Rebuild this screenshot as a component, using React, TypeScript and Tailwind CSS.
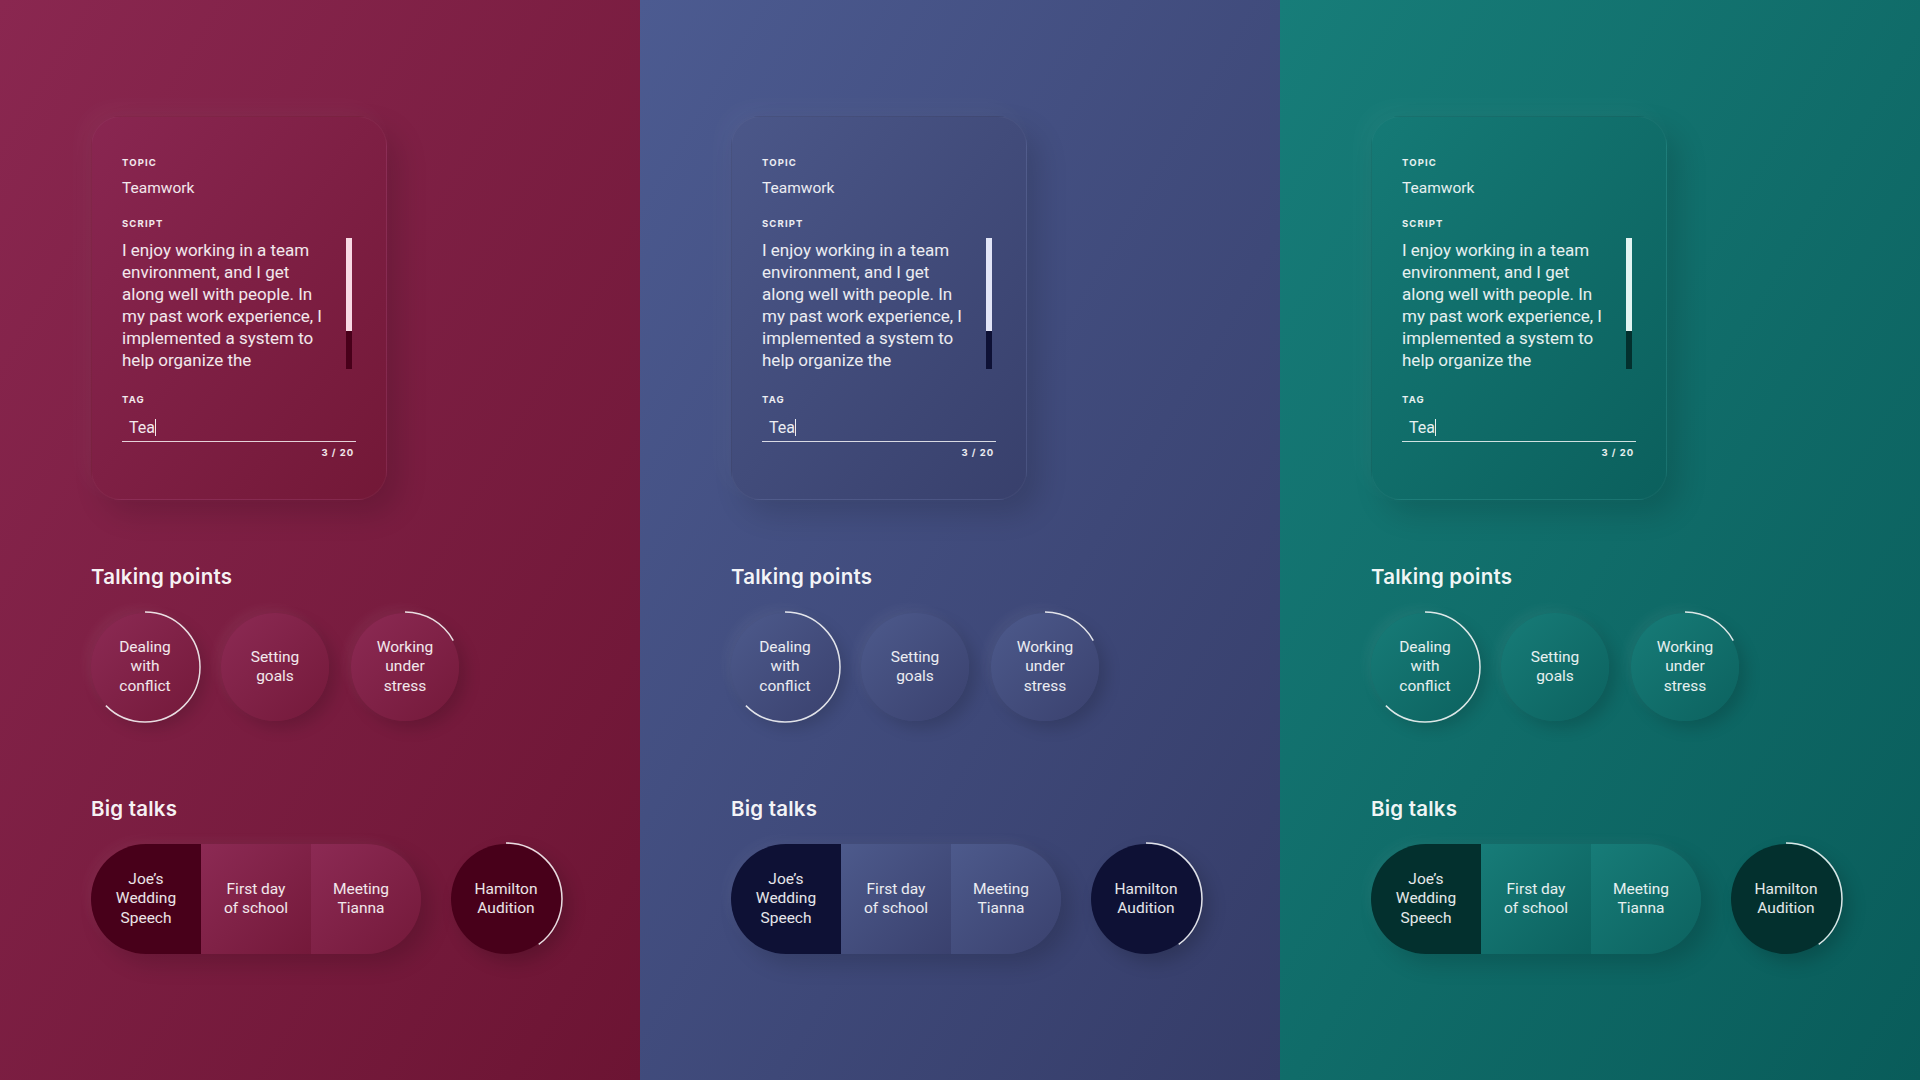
import React from 'react';

type Theme = {
  panel: string;
  card: string;
  soft: string;
  dark: string;
  thumb: string;
  track: string;
};

const themes: Theme[] = [
  {
    panel: 'bg-linear-to-br from-[#8a2750] to-[#6c1433]',
    card: 'bg-linear-to-br from-[#892651] to-[#731837]',
    soft: 'bg-linear-to-br from-[#8c2a54] to-[#74193a]',
    dark: 'bg-[#48001a]',
    thumb: 'bg-[#f8d9e4]',
    track: 'bg-[#48001a]',
  },
  {
    panel: 'bg-linear-to-br from-[#4c5b91] to-[#353c68]',
    card: 'bg-linear-to-br from-[#4b5789] to-[#38406c]',
    soft: 'bg-linear-to-br from-[#4d5a8c] to-[#3a416e]',
    dark: 'bg-[#0e1135]',
    thumb: 'bg-[#e2e5f7]',
    track: 'bg-[#0e1135]',
  },
  {
    panel: 'bg-linear-to-br from-[#177d79] to-[#095c5a]',
    card: 'bg-linear-to-br from-[#157a76] to-[#0b605d]',
    soft: 'bg-linear-to-br from-[#177c78] to-[#0c625f]',
    dark: 'bg-[#03302e]',
    thumb: 'bg-[#e2f4f2]',
    track: 'bg-[#03302e]',
  },
];

const scriptLines = [
  'I enjoy working in a team',
  'environment, and I get',
  'along well with people. In',
  'my past work experience, I',
  'implemented a system to',
  'help organize the',
];

const talkingPoints = [
  { lines: ['Dealing', 'with', 'conflict'], progress: 0.625 },
  { lines: ['Setting', 'goals'], progress: 0 },
  { lines: ['Working', 'under', 'stress'], progress: 0.17 },
];

const body = { fontFamily: 'Roboto, "Noto Sans", sans-serif' };
const heading = { fontFamily: 'Inter, "Open Sans", sans-serif' };

function Arc({ progress, size }: { progress: number; size: number }) {
  if (!progress) return null;
  const r = size / 2 - 1;
  const c = 2 * Math.PI * r;
  return (
    <svg
      width={size}
      height={size}
      viewBox={`0 0 ${size} ${size}`}
      className="absolute -top-[2px] -left-[2px] pointer-events-none"
    >
      <circle
        cx={size / 2}
        cy={size / 2}
        r={r}
        fill="none"
        stroke="rgba(255,255,255,0.85)"
        strokeWidth={1.5}
        strokeDasharray={`${c * progress} ${c}`}
        transform={`rotate(-90 ${size / 2} ${size / 2})`}
      />
    </svg>
  );
}

const Label: React.FC<{ children: React.ReactNode }> = ({ children }) => (
  <div
    className="text-[9.5px] leading-[12px] font-bold tracking-[0.12em] uppercase text-white/90"
    style={heading}
  >
    {children}
  </div>
);

function Panel({ t }: { t: Theme }) {
  return (
    <div className={`w-[640px] h-[1080px] pl-[91px] pt-[116px] ${t.panel}`} style={body}>
      <div
        className={`w-[296px] h-[384px] rounded-[30px] px-[30px] pt-[40px] border border-white/[0.04] shadow-[12px_14px_30px_rgba(0,0,0,0.14),-8px_-8px_24px_rgba(255,255,255,0.04)] ${t.card}`}
      >
        <Label>Topic</Label>
        <div className="mt-[9px] text-[15.5px] leading-[20px] text-white/90">Teamwork</div>
        <div className="mt-[20px]">
          <Label>Script</Label>
        </div>
        <div className="mt-[9px] flex">
          <div className="w-[222px] text-[17px] leading-[22px] text-white/90">
            {scriptLines.map((l) => (
              <div key={l} className="whitespace-nowrap">
                {l}
              </div>
            ))}
          </div>
          <div className="ml-auto mr-[4px] mt-[-1px] w-[6px] h-[131px] flex flex-col">
            <div className={`h-[93px] ${t.thumb}`} />
            <div className={`flex-1 ${t.track}`} />
          </div>
        </div>
        <div className="mt-[23px]">
          <Label>Tag</Label>
        </div>
        <div className="mt-[8px] h-[28px] border-b border-white/80 flex items-center pl-[7px] text-[16px] text-white/90">
          <span>Tea</span>
          <span className="w-px h-[17px] bg-white/90" />
        </div>
        <div
          className="mt-[5px] text-right pr-[2px] text-[9.5px] leading-[12px] font-bold tracking-[0.1em] text-white/90"
          style={heading}
        >
          3 / 20
        </div>
      </div>

      <h2 className="mt-[63px] text-[20.5px] leading-[28px] font-semibold tracking-[0.01em] text-white/95" style={heading}>
        Talking points
      </h2>
      <div className="mt-[22px] flex gap-[22px]">
        {talkingPoints.map((p) => (
          <div
            key={p.lines[0]}
            className={`relative w-[108px] h-[108px] rounded-full flex flex-col items-center justify-center text-center text-[15.5px] leading-[19.5px] text-white/90 shadow-[7px_7px_16px_rgba(0,0,0,0.15),-5px_-5px_12px_rgba(255,255,255,0.05)] ${t.soft}`}
          >
            {p.lines.map((l) => (
              <div key={l}>{l}</div>
            ))}
            <Arc progress={p.progress} size={112} />
          </div>
        ))}
      </div>

      <h2 className="mt-[74px] text-[20.5px] leading-[28px] font-semibold tracking-[0.01em] text-white/95" style={heading}>
        Big talks
      </h2>
      <div className="mt-[21px] flex items-center">
        <div className="flex h-[110px] rounded-full shadow-[10px_10px_22px_rgba(0,0,0,0.15),-5px_-5px_12px_rgba(255,255,255,0.04)]">
          <div
            className={`w-[110px] rounded-l-full flex flex-col items-center justify-center text-center text-[15.5px] leading-[19.5px] text-white/90 ${t.dark}`}
          >
            <div>Joe’s</div>
            <div>Wedding</div>
            <div>Speech</div>
          </div>
          <div
            className={`w-[110px] flex flex-col items-center justify-center text-center text-[15.5px] leading-[19.5px] text-white/90 ${t.soft}`}
          >
            <div>First day</div>
            <div>of school</div>
          </div>
          <div
            className={`w-[110px] rounded-r-full flex flex-col items-center justify-center pr-[10px] text-center text-[15.5px] leading-[19.5px] text-white/90 ${t.soft}`}
          >
            <div>Meeting</div>
            <div>Tianna</div>
          </div>
        </div>
        <div
          className={`relative ml-[30px] w-[110px] h-[110px] rounded-full flex flex-col items-center justify-center text-center text-[15.5px] leading-[19.5px] text-white/90 shadow-[8px_8px_18px_rgba(0,0,0,0.18)] ${t.dark}`}
        >
          <div>Hamilton</div>
          <div>Audition</div>
          <Arc progress={0.4} size={114} />
        </div>
      </div>
    </div>
  );
}

export default function App() {
  return (
    <div className="flex w-[1920px] h-[1080px] overflow-hidden">
      {themes.map((t, i) => (
        <Panel key={i} t={t} />
      ))}
    </div>
  );
}
